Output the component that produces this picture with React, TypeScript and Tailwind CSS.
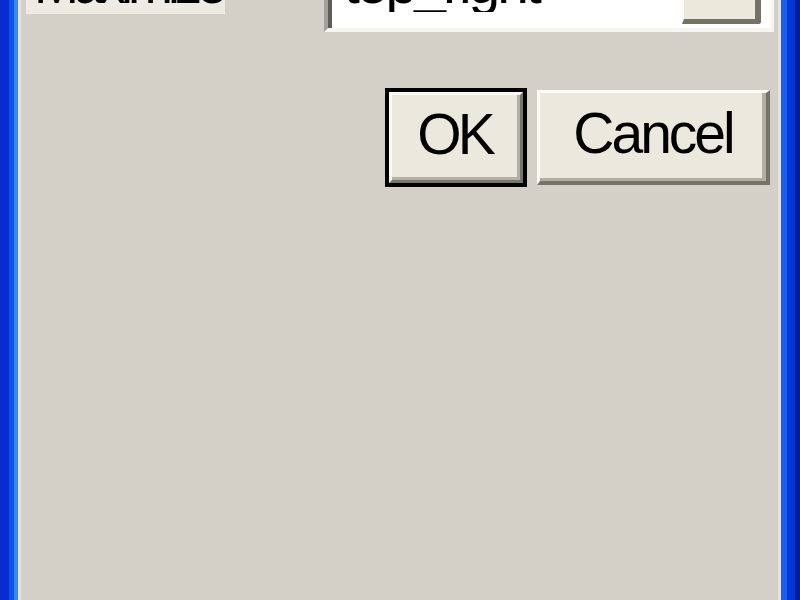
import React from 'react';

const font = "font-['Liberation_Sans',Arial,sans-serif]";

const App: React.FC = () => {
  return (
    <div className={`w-[800px] h-[600px] overflow-hidden flex bg-[#d4d0c8] ${font}`}>
      {/* left window frame */}
      <div className="flex h-full w-[21px] shrink-0">
        <div className="w-[9px] bg-[#0a2bd2]" />
        <div className="w-[5px] bg-[#0a55e6]" />
        <div className="w-[4px] bg-[#3d86ee]" />
        <div className="w-[3px] bg-[#e6e2d8]" />
      </div>

      {/* dialog body */}
      <div className="flex-1 flex flex-col">
        <div className="flex items-start -mt-[40px] h-[72px]">
          <div className="ml-[5px] w-[199px] h-[54px] bg-[#eeece2] overflow-hidden">
            <div className="-mt-[3px] pl-[8px] text-[54px] leading-[54px] tracking-[-5px] text-black whitespace-nowrap">
              Maximize
            </div>
          </div>

          <div className="ml-[99px] w-[450px] h-[72px] border-l-[4px] border-l-[#a3a199] border-b-[4px] border-b-[#f6f5f0] border-r-[3px] border-r-[#f6f5f0]">
            <div className="h-full flex items-start bg-white border-l-[4px] border-l-[#5e5c55]">
              <div className="flex-1 pl-[12px] -mt-[5px] text-[57px] leading-none tracking-[-3px] text-black whitespace-nowrap overflow-hidden">
                top_right
              </div>
              <div className="mt-[2px] w-[79px] h-[62px] bg-[#ebe9dc] border-l-[2px] border-l-[#f8f7f1] border-b-[5px] border-b-[#747267] border-r-[6px] border-r-[#747267] rounded-br-[3px]" />
              <div className="w-[10px]" />
            </div>
          </div>
        </div>

        <div className="mt-[56px] flex items-center justify-end gap-[10px] pr-[8px]">
          <button className="w-[142px] h-[99px] border-[4px] border-black">
            <div className="h-full border-t-[3px] border-l-[3px] border-t-[#fbfaf4] border-l-[#fbfaf4] border-r-[3px] border-b-[3px] border-r-[#777569] border-b-[#777569]">
              <div className="h-full flex items-center justify-center pb-[4px] bg-[#ebe9dd] border-r-[3px] border-b-[3px] border-r-[#b4b1a4] border-b-[#b4b1a4] text-[57px] leading-none tracking-[-4px] text-black">
                OK
              </div>
            </div>
          </button>
          <button className="w-[233px] h-[95px] border-t-[3px] border-l-[3px] border-t-[#fbfaf4] border-l-[#fbfaf4] border-r-[4px] border-b-[4px] border-r-[#757367] border-b-[#757367]">
            <div className="h-full flex items-center justify-center pb-[4px] pl-[4px] bg-[#ebe9dd] border-r-[4px] border-b-[3px] border-r-[#b2afa2] border-b-[#b2afa2] text-[57px] leading-none tracking-[-3px] text-black">
              Cancel
            </div>
          </button>
        </div>
      </div>

      {/* right window frame */}
      <div className="flex h-full w-[22px] shrink-0">
        <div className="w-[3px] bg-[#e6e2d8]" />
        <div className="w-[6px] bg-[#1a5ef0]" />
        <div className="w-[8px] bg-[#0035d6]" />
        <div className="w-[5px] bg-[#001f96]" />
      </div>
    </div>
  );
};

export default App;
